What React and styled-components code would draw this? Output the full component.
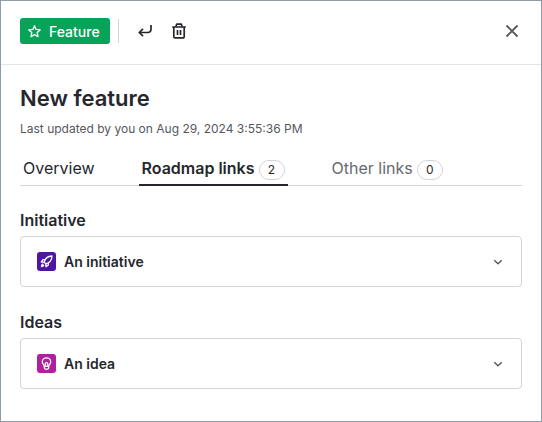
import { useState } from "react";

import styled, { createGlobalStyle } from "styled-components";

const tabs = [
    { id: "overview", label: "Overview" },
    { id: "roadmap", label: "Roadmap links", count: 2 },
    { id: "other", label: "Other links", count: 0 },
];

const sections = [
    { title: "Initiative", item: "An initiative", color: "#4f15a6", Icon: RocketIcon },
    { title: "Ideas", item: "An idea", color: "#b01fa0", Icon: BulbIcon },
];

function StarIcon() {
    return (
        <Svg width="13" height="13" viewBox="0 0 13 13" strokeWidth="1.3">
            <path d="M6.500 .8l1.600 3.600 4.100.5-3 2.700.8 4.100-3.500-2.100-3.500 2.100.8-4.100-3-2.700 4.100-.5z" />
        </Svg>
    );
}

function ReturnIcon() {
    return (
        <Svg width="16" height="16" viewBox="0 0 16 16" strokeWidth="1.7">
            <path d="M14 2v4.500a3 3 0 0 1-3 3H2.500M6 5.800L2.200 9.500 6 13.200" />
        </Svg>
    );
}

function TrashIcon() {
    return (
        <Svg width="16" height="16" viewBox="0 0 16 16" strokeWidth="1.700">
            <path d="M1.200 4h13.600M5 3.800l.6-2.600h4.800l.6 2.600M2.800 4v9.700a1.200 1.200 0 0 0 1.200 1.200h8a1.200 1.200 0 0 0 1.200-1.200V4M6.500 7v5M9.500 7v5" />
        </Svg>
    );
}

function CloseIcon() {
    return (
        <Svg width="14" height="14" viewBox="0 0 14 14" strokeWidth="1.9">
            <path d="M1.500 1.500l11 11M12.500 1.500l-11 11" />
        </Svg>
    );
}

function ChevronIcon() {
    return (
        <Svg width="10" height="10" viewBox="0 0 10 10" strokeWidth="1.4">
            <path d="M1.300 3.200L5 6.700l3.700-3.500" />
        </Svg>
    );
}

function RocketIcon() {
    return (
        <Svg width="13" height="13" viewBox="0 0 13 13" strokeWidth="1.3">
            <path d="M4.200 7.200C5 4 7.500 1.200 12 1c-.2 4.500-3 7-6.200 7.800z" />
            <path d="M5 4.700H3L1.300 7l2.900.2M8.300 8v2L6 11.700l-.2-2.900M3.200 9c-1.200.3-1.600 1.300-1.700 2.500 1.200-.1 2.200-.5 2.500-1.700" />
        </Svg>
    );
}

function BulbIcon() {
    return (
        <Svg width="13" height="13" viewBox="0 0 13 13" strokeWidth="1.3">
            <path d="M4.300 9.200C3.900 7.800 2.300 7 2.300 4.800a4.200 4 0 0 1 8.400 0C10.700 7 9.100 7.800 8.700 9.200v1.600c0 .8-.6 1.400-1.400 1.400H5.700c-.8 0-1.400-.6-1.400-1.400z" />
            <path d="M5.200 9.200V7a1.300 1.300 0 0 1 2.600 0v2.200M4.300 9.300h4.400" />
        </Svg>
    );
}

const App = () => {
    const [active, setActive] = useState("roadmap");

    return (
        <>
            <GlobalStyle />
            <Panel>
                <Toolbar>
                    <TypeButton>
                        <StarIcon />
                        Feature
                    </TypeButton>
                    <Divider />
                    <IconButton aria-label="Convert">
                        <ReturnIcon />
                    </IconButton>
                    <IconButton aria-label="Delete">
                        <TrashIcon />
                    </IconButton>
                    <CloseButton aria-label="Close">
                        <CloseIcon />
                    </CloseButton>
                </Toolbar>
                <Content>
                    <Title>New feature</Title>
                    <Updated>Last updated by you on Aug 29, 2024 3:55:36 PM</Updated>
                    <TabList role="tablist">
                        {tabs.map((tab) => (
                            <Tab
                                key={tab.id}
                                role="tab"
                                aria-selected={active === tab.id}
                                $active={active === tab.id}
                                $muted={tab.count === 0}
                                onClick={() => setActive(tab.id)}
                            >
                                {tab.label}
                                {tab.count !== undefined && <Count>{tab.count}</Count>}
                            </Tab>
                        ))}
                    </TabList>
                    <Sections>
                        {sections.map(({ title, item, color, Icon }) => (
                            <section key={title}>
                                <SectionTitle>{title}</SectionTitle>
                                <Card aria-expanded="false">
                                    <Tile $color={color}>
                                        <Icon />
                                    </Tile>
                                    <CardLabel>{item}</CardLabel>
                                    <Chevron>
                                        <ChevronIcon />
                                    </Chevron>
                                </Card>
                            </section>
                        ))}
                    </Sections>
                </Content>
            </Panel>
        </>
    );
};

const GlobalStyle = createGlobalStyle`
    * {
        box-sizing: border-box;
    }
    body {
        margin: 0;
        background: #fff;
        color: #26272d;
        font-family: Inter, "Liberation Sans", sans-serif;
    }
    button {
        border: 0;
        padding: 0;
        background: none;
        color: inherit;
        font-family: inherit;
        cursor: pointer;
    }
`;

const Svg = styled.svg`
    display: block;
    flex-shrink: 0;
    fill: none;
    stroke: currentColor;
    stroke-linejoin: round;
`;

const Panel = styled.main`
    min-height: 100vh;
    border: 1px solid #8d9dab;
`;

const Toolbar = styled.header`
    display: flex;
    align-items: center;
    padding: 17px 19px 20px;
    border-bottom: 1px solid #e1e5ea;
`;

const TypeButton = styled.button`
    display: flex;
    align-items: center;
    gap: 8px;
    height: 26px;
    && {
        padding: 0 10px 0 8px;
        background: #06a359;
        color: #fff;
    }
    border-radius: 3px;
    font-size: 14px;
    font-weight: 500;
`;

const Divider = styled.span`
    width: 1px;
    height: 24px;
    margin: 0 13px 0 8px;
    background: #d3d5d9;
`;

const IconButton = styled.button`
    display: grid;
    place-items: center;
    width: 26px;
    height: 26px;
    margin-right: 8px;
`;

const CloseButton = styled(IconButton)`
    width: 20px;
    margin: 0 0 0 auto;
    && {
        color: #55575d;
    }
`;

const Content = styled.div`
    padding: 17px 19px 32px;
`;

const Title = styled.h1`
    margin: 0;
    font-size: 22px;
    line-height: 32px;
    font-weight: 600;
`;

const Updated = styled.p`
    margin: 6px 0 0;
    color: #55575e;
    font-size: 12px;
    line-height: 18px;
`;

const TabList = styled.div`
    display: flex;
    gap: 41px;
    margin-top: 20px;
    border-bottom: 1px solid #d3d5d9;
`;

const Tab = styled.button`
    display: flex;
    align-items: baseline;
    gap: 4px;
    height: 28px;
    margin-bottom: -1px;
    && {
        padding: 0 3px 4px;
        color: ${(props) => (props.$muted ? "#686a71" : "#26272d")};
        border-bottom: 2px solid ${(props) => (props.$active ? "#26272d" : "transparent")};
    }
    font-size: 16px;
    line-height: 20px;
    font-weight: ${(props) => (props.$active ? 600 : 400)};
    white-space: nowrap;
`;

const Count = styled.span`
    width: 26px;
    height: 20px;
    border: 1px solid #d3d5d9;
    border-radius: 10px;
    color: #26272d;
    font-size: 12px;
    line-height: 18px;
    font-weight: 400;
    text-align: center;
`;

const Sections = styled.div`
    display: grid;
    gap: 25px;
    margin-top: 24px;
`;

const SectionTitle = styled.h2`
    margin: 0 0 5px;
    font-size: 16px;
    line-height: 21px;
    font-weight: 600;
`;

const Card = styled.button`
    display: flex;
    align-items: center;
    gap: 8px;
    width: 100%;
    height: 51px;
    && {
        padding: 0 18px 0 16px;
        border: 1px solid #d3d5d9;
    }
    border-radius: 4px;
    text-align: left;
`;

const Tile = styled.span`
    display: grid;
    place-items: center;
    width: 19px;
    height: 19px;
    border-radius: 3px;
    background: ${(props) => props.$color};
    color: #fff;
`;

const CardLabel = styled.span`
    flex: 1;
    font-size: 14px;
    line-height: 20px;
    font-weight: 600;
`;

const Chevron = styled.span`
    color: #55575d;
`;

export default App;
